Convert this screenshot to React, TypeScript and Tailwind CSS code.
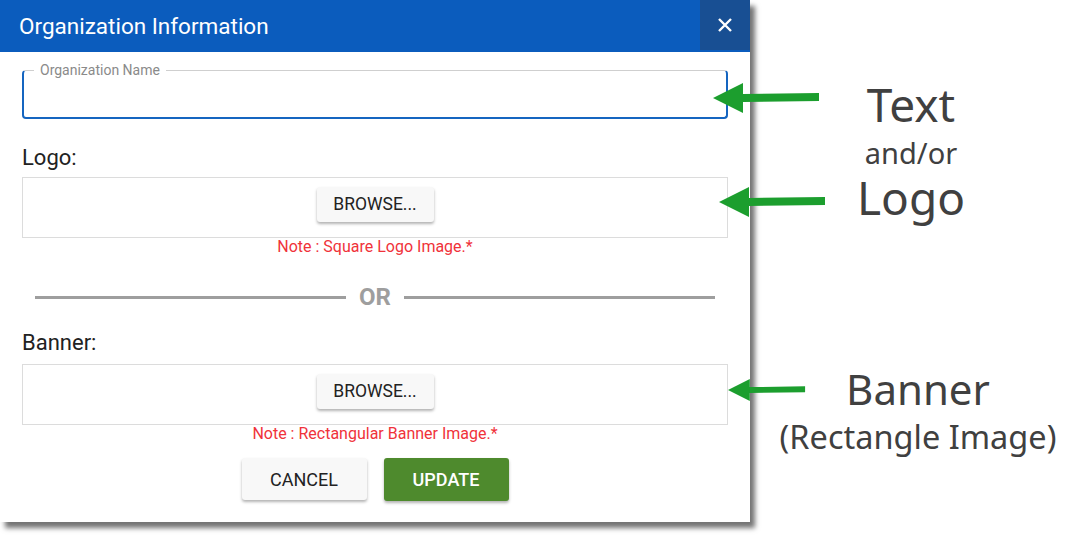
import React, { FC } from "react";

const Arrow: FC<{ className: string }> = ({ className }) => (
  <svg className={className} width="110" height="32" viewBox="0 0 110 32">
    <polygon points="0,16 30,1 30,12 106,11 106,19 30,20 30,31" fill="#1c9e2e" />
  </svg>
);

const BrowseBox: FC = () => (
  <div className="flex h-[61px] items-start justify-center border border-[#dcdcdc] pt-[9px]">
    <button className="h-[35px] w-[117px] rounded-[3px] bg-[#f8f8f8] text-[17.5px] text-[#222] shadow-[0_2px_3px_rgba(0,0,0,0.3)]">
      BROWSE...
    </button>
  </div>
);

const App: FC = () => {
  return (
    <div className="relative h-[541px] w-[1079px] overflow-hidden bg-white font-['Roboto',sans-serif]">
      <div className="flex w-[750px] flex-col bg-white shadow-[5px_6px_5px_rgba(0,0,0,0.55)]">
        <div className="flex h-[52px] items-start justify-between bg-[#0b5cbd]">
          <h2 className="pl-[19px] pt-[10px] text-[22.5px] text-white">Organization Information</h2>
          <button className="flex h-[50px] w-[50px] items-center justify-center bg-[#184f93] text-white">
            <svg width="16" height="16" viewBox="0 0 16 16">
              <path d="M2 2 L14 14 M14 2 L2 14" stroke="white" strokeWidth="2.4" />
            </svg>
          </button>
        </div>

        <div className="flex flex-col px-[22px] pb-[21px]">
          <div className="relative mt-[18px] h-[49px] rounded-[4px] border-x-2 border-b-2 border-t border-[#1565c0] border-t-[#cfcfcf]">
            <span className="absolute left-[10px] top-[-10px] bg-white px-[6px] text-[14px] leading-[18px] text-[#8a8a8a]">
              Organization Name
            </span>
          </div>

          <div className="mt-[27px] text-[22px] leading-[24px] text-[#222]">Logo:</div>
          <div className="mt-[7px]">
            <BrowseBox />
          </div>
          <div className="text-center text-[16px] leading-[17px] text-[#f0323a]">Note : Square Logo Image.*</div>

          <div className="mt-[30px] flex items-center gap-[13px] px-[13px]">
            <span className="h-[3px] flex-1 bg-[#9e9e9e]" />
            <span className="text-[24px] font-bold leading-[24px] text-[#9e9e9e]">OR</span>
            <span className="h-[3px] flex-1 bg-[#9e9e9e]" />
          </div>

          <div className="mt-[22px] text-[22px] leading-[24px] text-[#222]">Banner:</div>
          <div className="mt-[9px]">
            <BrowseBox />
          </div>
          <div className="text-center text-[16px] leading-[17px] text-[#f0323a]">Note : Rectangular Banner Image.*</div>

          <div className="mt-[16px] flex justify-center gap-[17px]">
            <button className="h-[42px] w-[125px] rounded-[3px] bg-[#f8f8f8] text-[18px] text-[#222] shadow-[0_2px_3px_rgba(0,0,0,0.3)]">
              CANCEL
            </button>
            <button className="h-[43px] w-[125px] rounded-[3px] bg-[#4e8a2d] text-[18px] font-medium text-white shadow-[0_2px_3px_rgba(0,0,0,0.3)]">
              UPDATE
            </button>
          </div>
        </div>
      </div>

      <Arrow className="absolute left-[713px] top-[82px]" />
      <Arrow className="absolute left-[719px] top-[186px]" />
      <Arrow className="absolute left-[728px] top-[374px] w-[80px]" />

      <div className="absolute left-[820px] top-[76px] flex w-[182px] flex-col items-center font-['Noto_Sans',sans-serif] text-[#404040]">
        <span className="text-[46px] leading-[56px]">Text</span>
        <span className="mt-[6px] text-[29px] leading-[30px]">and/or</span>
        <span className="text-[46px] leading-[58px]">Logo</span>
      </div>

      <div className="absolute left-[770px] top-[363px] flex w-[296px] flex-col items-center font-['Noto_Sans',sans-serif] text-[#404040]">
        <span className="text-[42px] leading-[52px]">Banner</span>
        <span className="mt-[2px] text-[32.5px] leading-[40px]">(Rectangle Image)</span>
      </div>
    </div>
  );
};

export default App;
